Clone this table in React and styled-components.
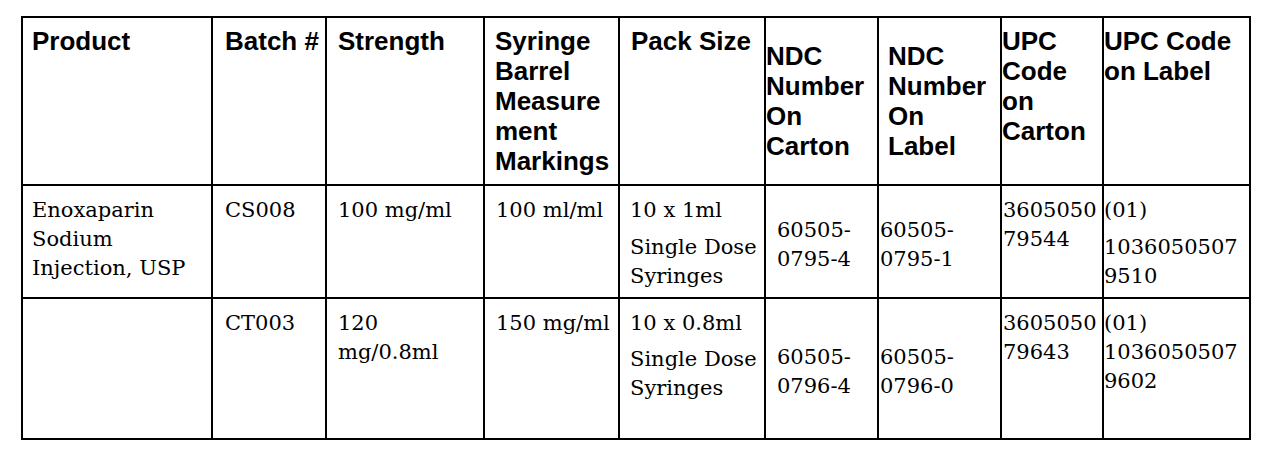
import React from "react";
import styled, { createGlobalStyle } from "styled-components";

const GlobalStyle = createGlobalStyle`
  html, body {
    margin: 0;
    padding: 0;
    background: #fff;
  }
  body {
    width: 1265px;
    height: 460px;
    overflow: hidden;
  }
`;

const Page = styled.div`
  padding: 16px 0 0 21px;
`;

const Table = styled.table`
  border-collapse: collapse;
  table-layout: fixed;
  width: 1228px;
`;

const Row = styled.tr`
  height: ${p => p.$h}px;
`;

const HeadCell = styled.th`
  border: 2px solid #000;
  font-family: "Liberation Sans", Arial, sans-serif;
  font-weight: bold;
  font-size: 26px;
  line-height: 30px;
  color: #000;
  text-align: left;
  vertical-align: ${p => (p.$middle ? "middle" : "top")};
  padding: ${p => (p.$middle ? "0" : "8px")} 2px 0 ${p => p.$pad}px;
  white-space: nowrap;
`;

const BodyCell = styled.td`
  border: 2px solid #000;
  font-family: "DejaVu Serif", "Liberation Serif", serif;
  font-size: 21px;
  line-height: 29px;
  color: #000;
  text-align: left;
  vertical-align: ${p => (p.$middle ? "middle" : "top")};
  padding: ${p => (p.$middle ? "6px" : "10px")} 0 0 ${p => p.$pad}px;
  white-space: nowrap;
`;

const Line = styled.div`
  margin-top: ${p => p.$gap || 0}px;
`;

const widths = [190, 114, 158, 135, 146, 113, 123, 102, 147];

const header = [
  { lines: ["Product"], pad: 9 },
  { lines: ["Batch #"], pad: 12 },
  { lines: ["Strength"], pad: 11 },
  { lines: ["Syringe", "Barrel", "Measure", "ment", "Markings"], pad: 10 },
  { lines: ["Pack Size"], pad: 11 },
  { lines: ["NDC", "Number", "On", "Carton"], pad: 0, middle: true },
  { lines: ["NDC", "Number", "On", "Label"], pad: 9, middle: true },
  { lines: ["UPC", "Code", "on", "Carton"], pad: 0 },
  { lines: ["UPC Code", "on Label"], pad: 0 },
];

const rows = [
  {
    h: 113,
    cells: [
      { lines: ["Enoxaparin", "Sodium", "Injection, USP"], pad: 9 },
      { lines: ["CS008"], pad: 12 },
      { lines: ["100 mg/ml"], pad: 11 },
      { lines: ["100 ml/ml"], pad: 11 },
      { lines: ["10 x 1ml", "Single Dose", "Syringes"], pad: 10, gap: 8 },
      { lines: ["60505-", "0795-4"], pad: 11, middle: true },
      { lines: ["60505-", "0795-1"], pad: 1, middle: true },
      { lines: ["3605050", "79544"], pad: 1 },
      { lines: ["(01)", "1036050507", "9510"], pad: 0, gap: 8 },
    ],
  },
  {
    h: 141,
    cells: [
      { lines: [], pad: 9 },
      { lines: ["CT003"], pad: 12 },
      { lines: ["120", "mg/0.8ml"], pad: 11 },
      { lines: ["150 mg/ml"], pad: 11 },
      { lines: ["10 x 0.8ml", "Single Dose", "Syringes"], pad: 10, gap: 7 },
      { lines: ["60505-", "0796-4"], pad: 11, middle: true },
      { lines: ["60505-", "0796-0"], pad: 1, middle: true },
      { lines: ["3605050", "79643"], pad: 1 },
      { lines: ["(01)", "1036050507", "9602"], pad: 0 },
    ],
  },
];

export default function App() {
  return (
    <>
      <GlobalStyle />
      <Page>
        <Table>
          <colgroup>
            {widths.map((w, i) => (
              <col key={i} style={{ width: w }} />
            ))}
          </colgroup>
          <thead>
            <Row $h={168}>
              {header.map((c, i) => (
                <HeadCell key={i} $pad={c.pad} $middle={c.middle}>
                  {c.lines.map((l, j) => (
                    <Line key={j}>{l}</Line>
                  ))}
                </HeadCell>
              ))}
            </Row>
          </thead>
          <tbody>
            {rows.map((r, i) => (
              <Row key={i} $h={r.h}>
                {r.cells.map((c, j) => (
                  <BodyCell key={j} $pad={c.pad} $middle={c.middle}>
                    {c.lines.map((l, k) => (
                      <Line key={k} $gap={k === 1 ? c.gap : 0}>
                        {l}
                      </Line>
                    ))}
                  </BodyCell>
                ))}
              </Row>
            ))}
          </tbody>
        </Table>
      </Page>
    </>
  );
}
